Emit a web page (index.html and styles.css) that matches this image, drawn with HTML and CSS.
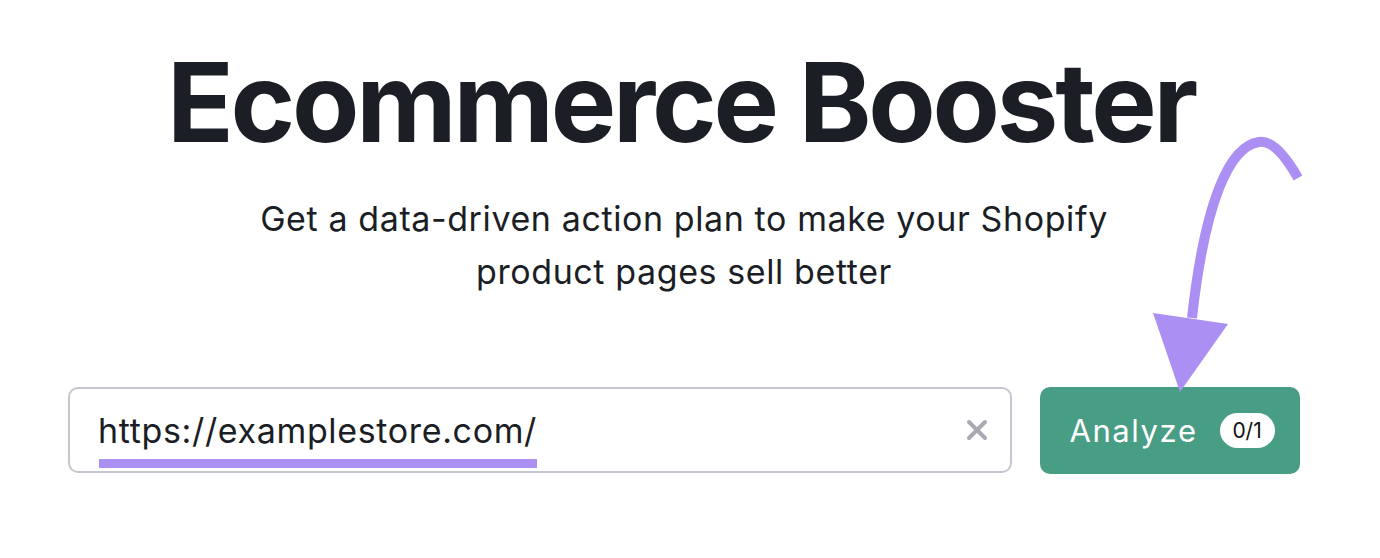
FILE: index.html
```html
<!DOCTYPE html>
<html lang="en">
<head>
    <meta charset="UTF-8">
    <meta name="viewport" content="width=device-width, initial-scale=1.0">
    <title>Ecommerce Booster</title>
    <link rel="stylesheet" href="styles.css">
</head>
<body>
    <div class="page">
        <h1 class="title">Ecommerce Booster</h1>
        <p class="subtitle">Get a data-driven action plan to make your Shopify<br>product pages sell better</p>

        <div class="search-row">
            <div class="url-field">
                <span class="url-text">https://examplestore.com/</span>
                <svg class="clear-icon" width="22" height="22" viewBox="0 0 22 22">
                    <path d="M3 3 L19 19 M19 3 L3 19" stroke="#a9a9b3" stroke-width="4" stroke-linecap="round"/>
                </svg>
            </div>
            <button class="analyze-btn">Analyze <span class="badge">0/1</span></button>
        </div>

        <!-- hand drawn arrow pointing to the button -->
        <svg class="arrow" width="1380" height="558" viewBox="0 0 1380 558">
            <path d="M1298 178 C1285 155 1272 140 1259 142 C1230 146 1205 200 1192 318" fill="none" stroke="#ab8ff2" stroke-width="10"/>
            <polygon points="1153,313 1228,324 1180,392" fill="#ab8ff2"/>
        </svg>
    </div>
</body>
</html>
```

FILE: styles.css
```css
body {
    font-family: Inter, "Noto Sans", sans-serif;
    background-color: #ffffff;
    color: #1b1e25;
    margin: 0;
}
.page {
    position: relative;
    width: 1380px;
    height: 558px;
    display: flex;
    flex-direction: column;
    align-items: center;
}
.title {
    font-size: 110px;
    font-weight: 700;
    letter-spacing: -3.2px;
    line-height: 1;
    margin: 47px 18px 0 0;
}
.subtitle {
    font-size: 34px;
    letter-spacing: 0.6px;
    line-height: 53px;
    text-align: center;
    margin: 35px 12px 0 0;
}
.search-row {
    display: flex;
    gap: 28px;
    margin: 89px 0 0 68px;
    align-self: flex-start;
}
.url-field {
    position: relative;
    width: 944px;
    height: 86px;
    box-sizing: border-box;
    border: 2px solid #c4c7cf;
    border-radius: 10px;
    display: flex;
    align-items: center;
    justify-content: space-between;
    padding: 0 22px 0 28px;
}
.url-text {
    font-size: 34px;
    letter-spacing: 0.65px;
    position: relative;
}
.url-text::after {
    content: "";
    position: absolute;
    left: 1px;
    right: 0;
    bottom: -17px;
    height: 9px;
    background: #ab8ff2;
}
.analyze-btn {
    width: 260px;
    height: 87px;
    border: none;
    border-radius: 10px;
    background: #489d85;
    color: #ffffff;
    font-family: Inter, "Noto Sans", sans-serif;
    font-size: 31px;
    letter-spacing: 1.6px;
    display: flex;
    align-items: center;
    justify-content: center;
    gap: 22px;
    padding: 0 0 0 4px;
}
.badge {
    background: #ffffff;
    color: #111111;
    font-size: 21px;
    letter-spacing: 0;
    border-radius: 18px;
    width: 55px;
    height: 35px;
    display: flex;
    align-items: center;
    justify-content: center;
}
.arrow {
    position: absolute;
    left: 0;
    top: 0;
    pointer-events: none;
}
```
